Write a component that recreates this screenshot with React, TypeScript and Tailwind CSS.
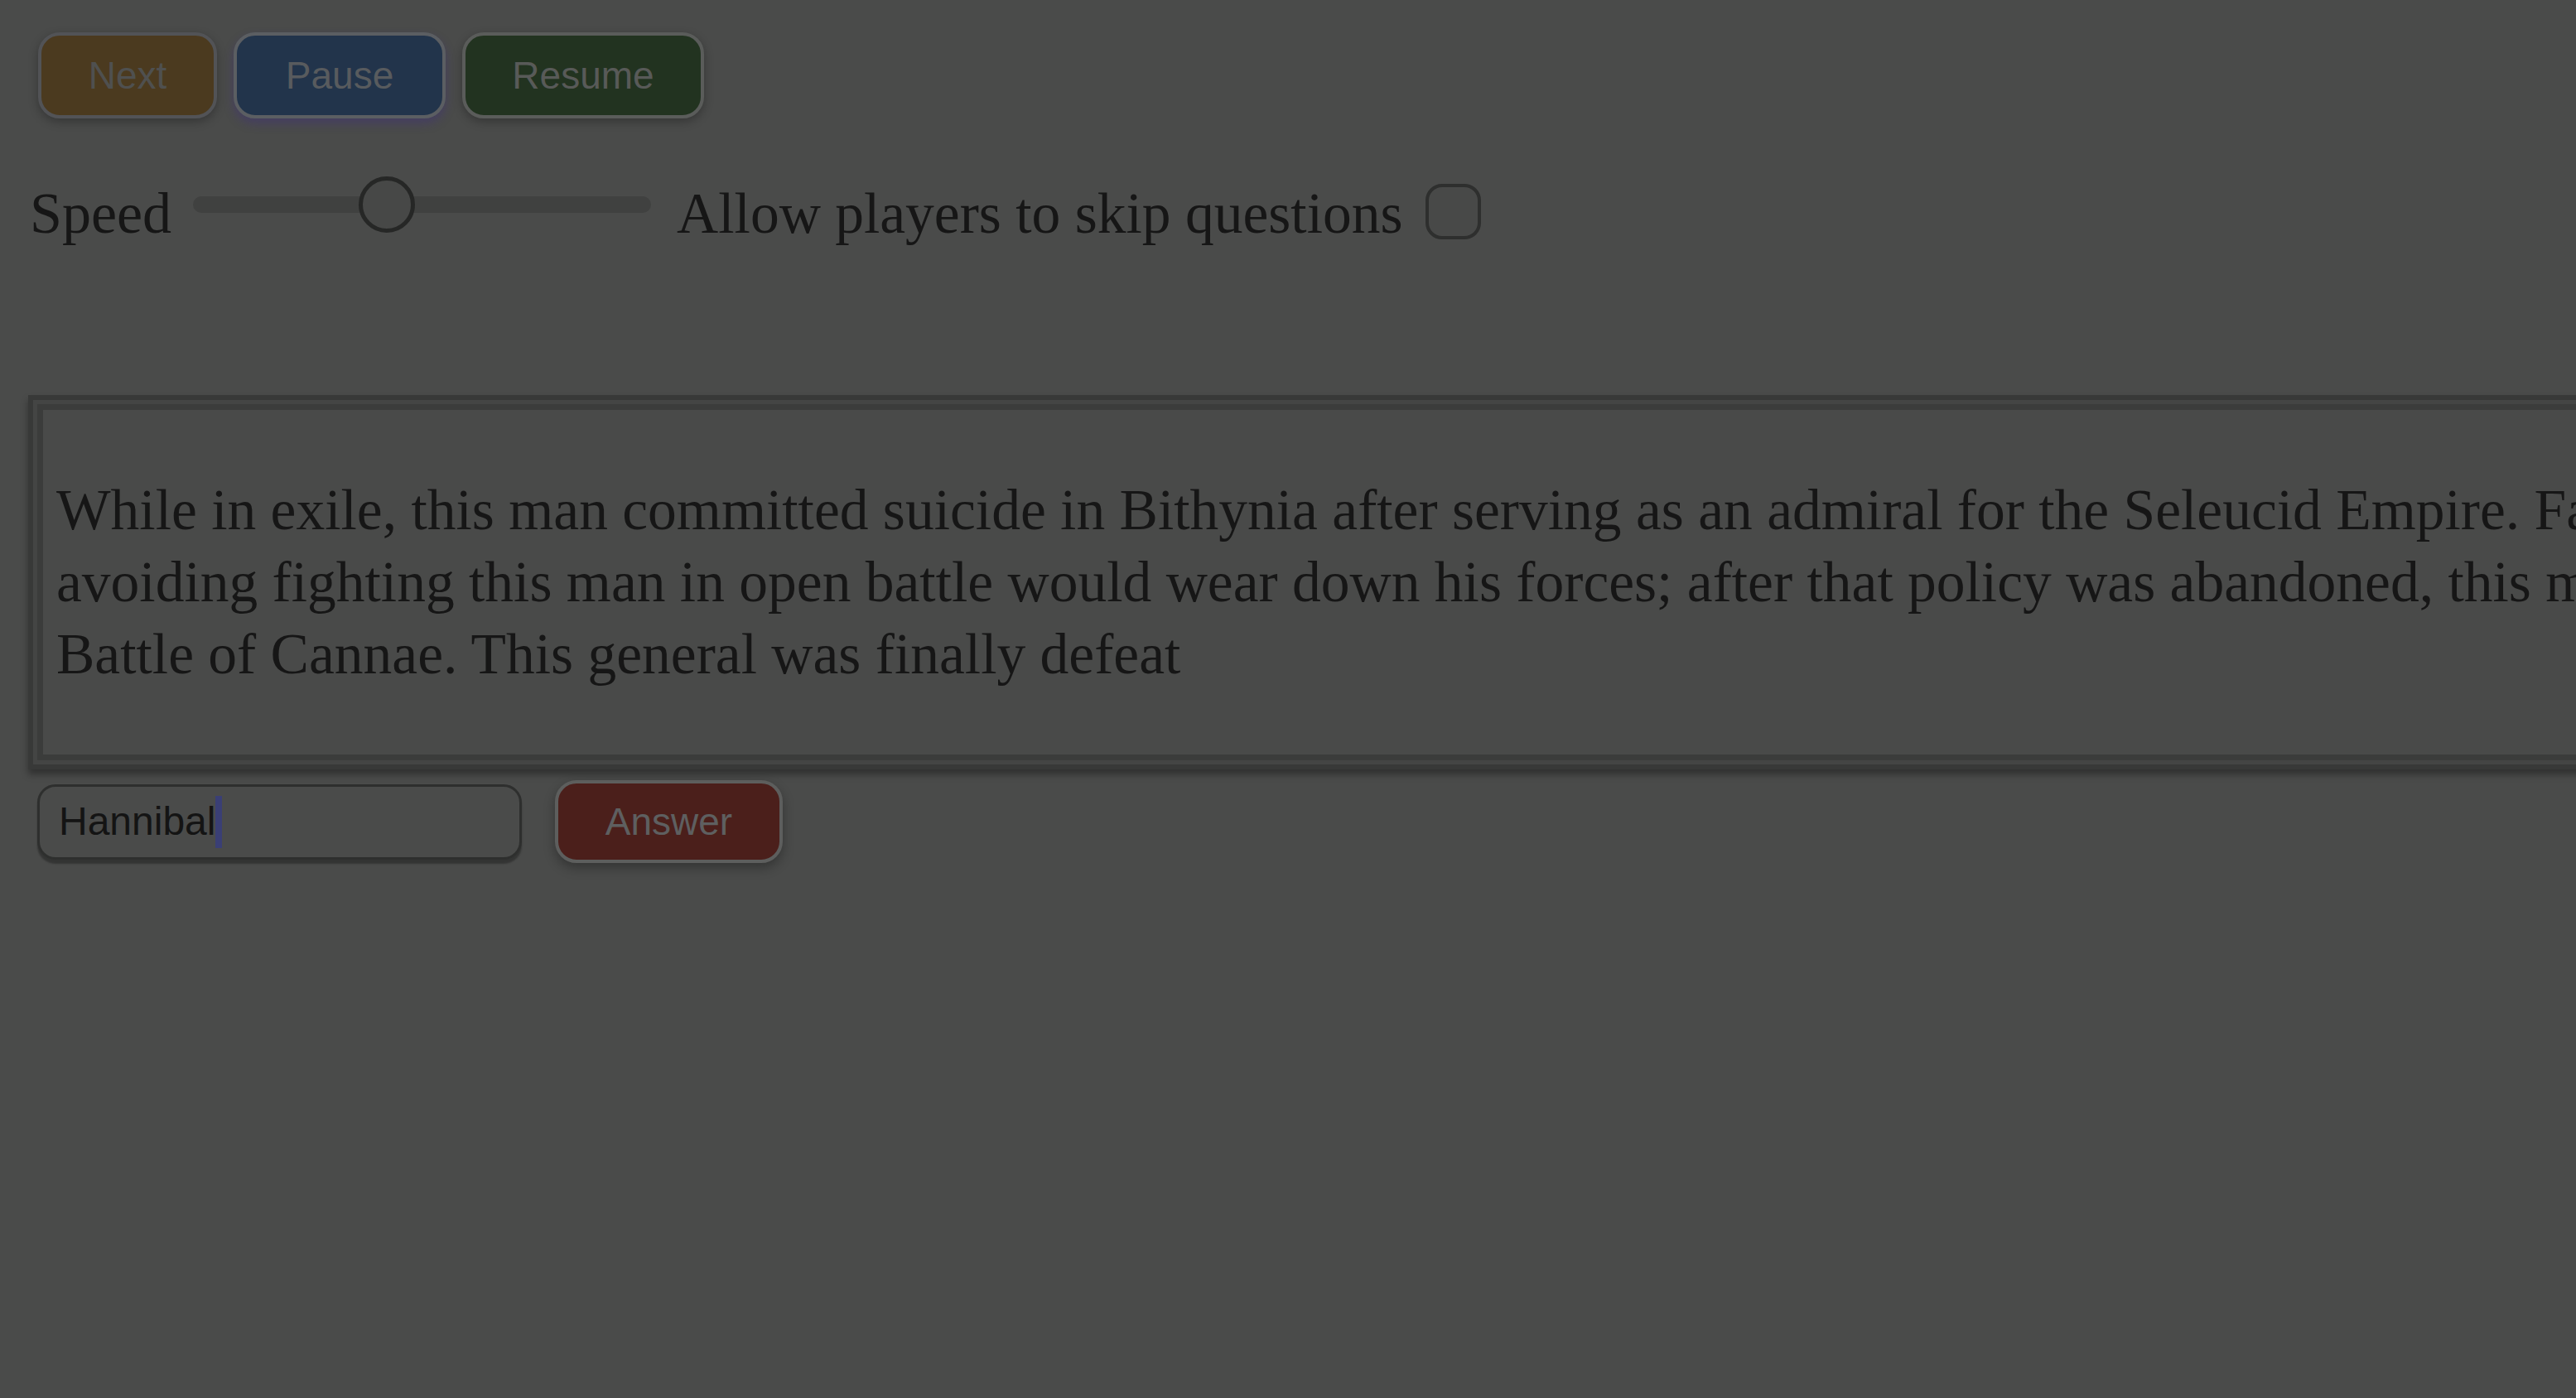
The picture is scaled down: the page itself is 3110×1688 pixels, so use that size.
const serif = { fontFamily: '"Liberation Serif", "Times New Roman", serif' };

const ControlButton = ({ label, className }: { label: string; className: string }) => (
  <button
    className={`h-[104px] rounded-[26px] border-[4px] px-0 text-[46px] font-['Liberation_Sans',Arial,sans-serif] shadow-[0_4px_12px_rgba(0,0,0,0.28)] ${className}`}
  >
    {label}
  </button>
);

const SpeedSlider = () => (
  <div className="relative mb-[22px] ml-[26px] h-[68px] w-[553px]">
    <div className="absolute left-0 right-0 top-[24px] h-[20px] rounded-full bg-[#404140]" />
    <div className="absolute left-[200px] top-0 h-[68px] w-[68px] rounded-full border-[5px] border-[#262726] bg-[#474847]" />
  </div>
);

export default function App() {
  return (
    <div className="h-[1688px] w-[3110px] overflow-hidden bg-[#4a4b4a] text-[#161616]">
      <div className="flex gap-[20px] pl-[46px] pt-[39px]">
        <ControlButton label="Next" className="w-[216px] border-[#525356] bg-[#4b3a1f] text-[#4f504f]" />
        <ControlButton label="Pause" className="w-[256px] border-[#5b5e62] bg-[#22344b] text-[#585b5e] shadow-[0_6px_12px_rgba(60,40,140,0.35)]" />
        <ControlButton label="Resume" className="w-[292px] border-[#5a5c5a] bg-[#223320] text-[#585a58]" />
      </div>

      <div className="mt-[65px] flex h-[100px] items-center pl-[36px]" style={serif}>
        <span className="text-[70px] leading-[80px]">Speed</span>
        <SpeedSlider />
        <span className="ml-[31px] text-[69.5px] leading-[80px]">Allow players to skip questions</span>
        <span className="mb-[6px] ml-[27px] h-[67px] w-[67px] rounded-[20px] border-[4px] border-[#2e2f2e] bg-[#484948]" />
      </div>

      <div className="ml-[34px] mt-[169px] w-[3300px] border-[6px] border-[#383938] bg-[#444544] p-[5px] shadow-[0_6px_8px_rgba(0,0,0,0.35)]">
        <div className="border-[7px] border-[#3b3c3b] bg-[#494a49] pb-[78px] pl-[16px] pt-[77px]">
          <p className="whitespace-nowrap text-[69.5px] leading-[87px]" style={serif}>
            While in exile, this man committed suicide in Bithynia after serving as an admiral for the Seleucid Empire. Fabius Maximus's policy of
            <br />
            avoiding fighting this man in open battle would wear down his forces; after that policy was abandoned, this man won the
            <br />
            Battle of Cannae. This general was finally defeat
          </p>
        </div>
      </div>

      <div className="mt-[13px] flex items-center gap-[40px] pl-[45px]">
        <div className="flex h-[91px] w-[585px] items-center rounded-[22px] border-[3px] border-[#2e2f2e] bg-[#4a4b4a] pl-[23px] font-['Liberation_Sans',Arial,sans-serif] text-[48px] text-[#141414] shadow-[0_5px_2px_rgba(0,0,0,0.3)]">
          <span>Hannibal</span>
          <span className="h-[63px] w-[8px] bg-[#3a3f75]" />
        </div>
        <button className="h-[100px] w-[275px] rounded-[26px] border-[4px] border-[#5d5e5d] bg-[#4b1f1b] font-['Liberation_Sans',Arial,sans-serif] text-[46px] text-[#5e5f60] shadow-[0_6px_14px_rgba(0,0,0,0.3)]">
          Answer
        </button>
      </div>
    </div>
  );
}
